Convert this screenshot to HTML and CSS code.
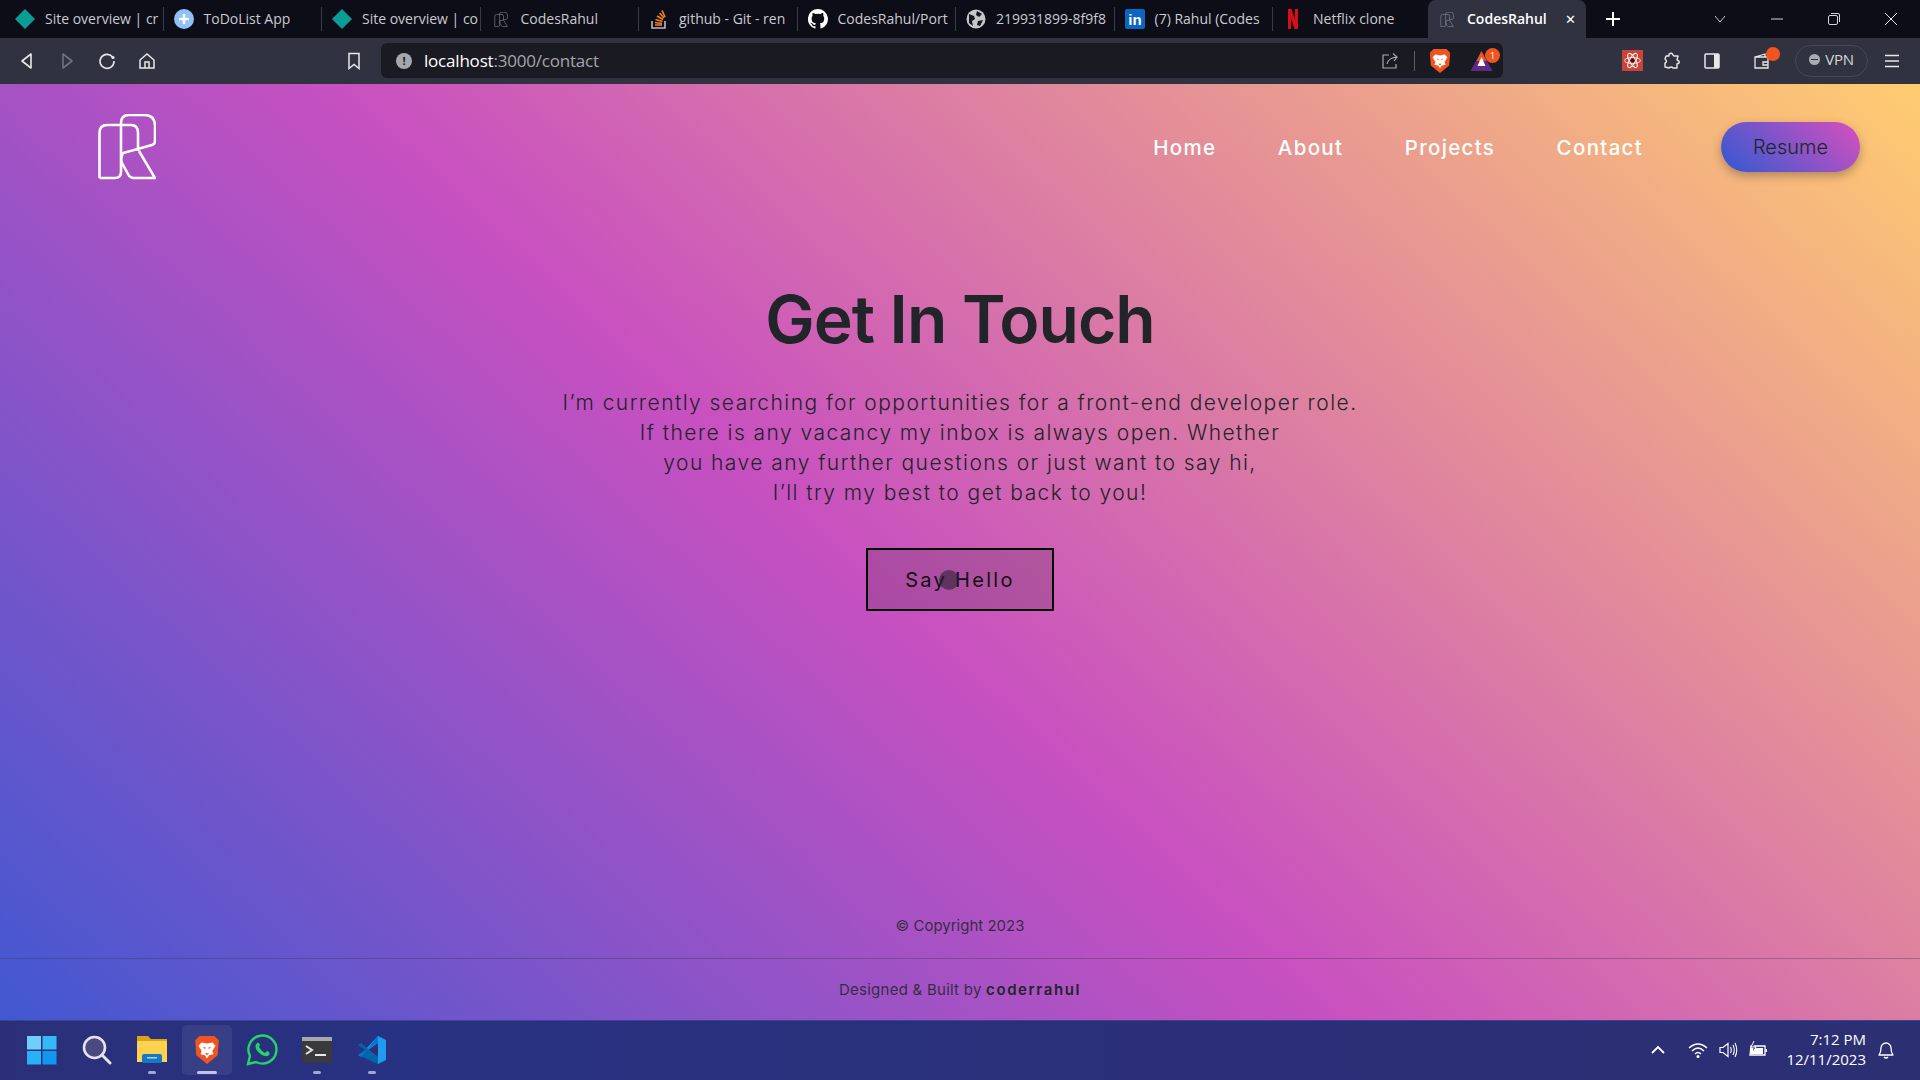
FILE: index.html
```html
<!DOCTYPE html>
<html lang="en">
<head>
<meta charset="utf-8">
<title>CodesRahul</title>
<link rel="stylesheet" href="styles.css">
</head>
<body>
<svg class="defs" width="0" height="0">
  <symbol id="rlogo" viewBox="0 0 58 66">
    <g fill="none" stroke="currentColor" stroke-width="2.600">
      <path d="M1.500 64V19Q1.500 11 9 11H33Q40 11 40 19V37"/>
      <path d="M1.500 64H17Q23 64 23 58V9Q23 1 31 1H46Q57 1 57 12V27Q57 30 54 31L25 39Q22 44 24 49L30 60Q32 64 36 64H57L41 37"/>
    </g>
  </symbol>
  <symbol id="brave" viewBox="0 0 24 28">
    <path d="M5 1H19L23 5 22 19 12 27 2 19 1 5Z" fill="#f1551f"/>
    <path d="M7 7L12 8 17 7 20 10 17 15 18 18 14 19 12 22 10 19 6 18 7 15 4 10Z" fill="#fff"/>
    <path d="M8 11L11 12 10 13ZM16 11L13 12 14 13ZM10 17H14L12 19Z" fill="#f1551f"/>
  </symbol>
</svg>

<div class="tabs">
  <div class="tab"><svg class="fav" viewBox="0 0 20 20"><path d="M10 0L20 10 10 20 0 10Z" fill="#0a9d97"/></svg><span class="tab-title">Site overview | cr</span></div>
  <div class="tab"><svg class="fav" viewBox="0 0 20 20"><circle cx="10" cy="10" r="10" fill="#8fc3f7"/><path d="M10 5V15M5 10H15" stroke="#fff" stroke-width="2.500"/></svg><span class="tab-title">ToDoList App</span></div>
  <div class="tab"><svg class="fav" viewBox="0 0 20 20"><path d="M10 0L20 10 10 20 0 10Z" fill="#0a9d97"/></svg><span class="tab-title">Site overview | co</span></div>
  <div class="tab"><svg class="fav fav-r"><use href="#rlogo"/></svg><span class="tab-title">CodesRahul</span></div>
  <div class="tab"><svg class="fav" viewBox="0 0 20 20"><path d="M3 12V19H16V12" fill="none" stroke="#bcbbbb" stroke-width="1.600"/><path d="M6 16H13M6 13.500L13 14.500M6.500 10.500L13.500 12.500M8 7L14 10.500M10.500 4L15 9M13 1.500L16 8" stroke="#f48024" stroke-width="1.700"/></svg><span class="tab-title">github - Git - ren</span></div>
  <div class="tab"><svg class="fav" viewBox="0 0 20 20"><path fill="#fff" d="M10 0a10 10 0 0 0-3.200 19.500c.5.100.7-.2.700-.5v-1.800c-2.800.6-3.400-1.300-3.400-1.300-.5-1.100-1.100-1.500-1.100-1.500-.9-.6.100-.6.100-.6 1 .1 1.500 1 1.500 1 .9 1.500 2.300 1.100 2.900.8.100-.6.300-1.100.6-1.300-2.200-.3-4.500-1.100-4.500-4.900 0-1.100.4-2 1-2.700-.1-.3-.4-1.300.1-2.700 0 0 .8-.3 2.700 1a9.500 9.500 0 0 1 5 0c1.900-1.300 2.700-1 2.700-1 .5 1.400.2 2.400.1 2.700.6.700 1 1.600 1 2.700 0 3.800-2.300 4.600-4.500 4.900.4.300.7.900.7 1.900V19c0 .3.200.6.700.5A10 10 0 0 0 10 0z"/></svg><span class="tab-title">CodesRahul/Port</span></div>
  <div class="tab"><svg class="fav" viewBox="0 0 20 20"><circle cx="10" cy="10" r="9.500" fill="#c5c6ca"/><path d="M3 5L8 7 9 10 6 12 7 17 3 14ZM11 2L16 5 13 8 10 6ZM12 12L17 11 14 17 11 16Z" fill="#15161f"/></svg><span class="tab-title">219931899-8f9f8</span></div>
  <div class="tab"><svg class="fav" viewBox="0 0 20 20"><rect width="20" height="20" rx="2" fill="#0a66c2"/><text class="li" x="10" y="16" text-anchor="middle">in</text></svg><span class="tab-title">(7) Rahul (Codes</span></div>
  <div class="tab"><svg class="fav" viewBox="0 0 20 20"><path d="M5 0H8.500L15 20H11.500ZM5 0H8V20L5 20ZM12 0H15V20H12Z" fill="#d70d18"/></svg><span class="tab-title">Netflix clone</span></div>
  <div class="tab tab-active"><svg class="fav fav-r"><use href="#rlogo"/></svg><span class="tab-title">CodesRahul</span><span class="tab-close">✕</span></div>
  <div class="newtab"><svg width="16" height="16" viewBox="0 0 16 16"><path d="M8 1V15M1 8H15" stroke="#fff" stroke-width="2"/></svg></div>
  <div class="win">
    <svg class="win-i" viewBox="0 0 14 14"><path d="M2 4L7 10 12 4" fill="none" stroke="#c9cad0" stroke-width="1"/></svg>
    <svg class="win-i" viewBox="0 0 14 14"><path d="M1 7H13" stroke="#d5d6da" stroke-width="1"/></svg>
    <svg class="win-i" viewBox="0 0 14 14"><rect x="1.500" y="3.500" width="9" height="9" rx="1.500" fill="none" stroke="#d5d6da"/><path d="M4 1.500H11Q12.500 1.500 12.500 3V10" fill="none" stroke="#d5d6da"/></svg>
    <svg class="win-i" viewBox="0 0 14 14"><path d="M1 1L13 13M13 1L1 13" stroke="#e6e6e8" stroke-width="1"/></svg>
  </div>
</div>

<div class="toolbar">
  <div class="nav-btns">
    <svg class="tb" viewBox="0 0 18 18"><path d="M13 2V16L4 9Z" fill="none" stroke="#e8e8ea" stroke-width="1.600" stroke-linejoin="round"/></svg>
    <svg class="tb" viewBox="0 0 18 18"><path d="M5 2V16L14 9Z" fill="none" stroke="#70727c" stroke-width="1.600" stroke-linejoin="round"/></svg>
    <svg class="tb" viewBox="0 0 18 18"><path d="M14.500 5A7 7 0 1 0 16 9" fill="none" stroke="#e8e8ea" stroke-width="1.600"/><circle cx="15" cy="5.500" r="1.600" fill="#e8e8ea"/></svg>
    <svg class="tb" viewBox="0 0 18 18"><path d="M2 8L9 2 16 8V16H2ZM7 16V10H11V16" fill="none" stroke="#e8e8ea" stroke-width="1.500"/></svg>
  </div>
  <svg class="tb bookmark" viewBox="0 0 18 18"><path d="M4 1.500H14V16.500L9 12.500 4 16.500Z" fill="none" stroke="#e8e8ea" stroke-width="1.500"/></svg>
  <div class="address">
    <span class="info">!</span>
    <span class="url"><span class="url-host">localhost</span>:3000/contact</span>
    <div class="addr-right">
      <svg class="tb" viewBox="0 0 18 18"><path d="M8 3H2V16H15V12" fill="none" stroke="#a9abb2" stroke-width="1.200"/><path d="M6 12Q7 6 16 5M12 1.500L16 5 13 9" fill="none" stroke="#a9abb2" stroke-width="1.200"/></svg>
      <span class="addr-sep"></span>
      <svg class="brave-sm"><use href="#brave"/></svg>
      <span class="rewards"><svg width="23" height="20" viewBox="0 0 22 20"><path d="M11 0L22 20H0Z" fill="#5f2a86"/><path d="M11 0L16 10H6Z" fill="#f1551f"/><path d="M11 6L15 15H7Z" fill="#fff"/></svg><span class="rewards-badge">1</span></span>
    </div>
  </div>
  <div class="ext">
    <span class="ext-react"><svg width="21" height="21" viewBox="0 0 21 21"><rect width="21" height="21" fill="#c8443a"/><g fill="none" stroke="#f6e6e2"><ellipse cx="10.500" cy="10.500" rx="8" ry="3"/><ellipse cx="10.500" cy="10.500" rx="8" ry="3" transform="rotate(60 10.500 10.500)"/><ellipse cx="10.500" cy="10.500" rx="8" ry="3" transform="rotate(120 10.500 10.500)"/></g><circle cx="10.500" cy="10.500" r="2" fill="#3a1512"/></svg></span>
    <svg class="tb" viewBox="0 0 18 18"><path d="M6 2Q9 0 10 3L11 4H15L14 8Q17 9 16 11L14 12V16H10Q8 14 6 16L2 15V11Q5 10 2 7L3 4H6Z" fill="none" stroke="#e8e8ea" stroke-width="1.400" stroke-linejoin="round"/></svg>
    <svg class="tb" viewBox="0 0 18 18"><rect x="2" y="2" width="14" height="14" rx="1" fill="none" stroke="#e8e8ea" stroke-width="1.500"/><rect x="11" y="2" width="5" height="14" fill="#e8e8ea"/></svg>
    <span class="wallet"><svg class="tb" viewBox="0 0 18 18"><path d="M2 5H15V16H2ZM2 5L12 2V5M10 10H15V13H10Z" fill="none" stroke="#e8e8ea" stroke-width="1.300"/></svg><span class="wallet-dot"></span></span>
    <span class="vpn"><span class="vpn-dot"></span>VPN</span>
    <svg class="tb" viewBox="0 0 18 18"><path d="M2 3.500H16M2 9H16M2 14.500H16" stroke="#e8e8ea" stroke-width="1.400"/></svg>
  </div>
</div>

<div class="page">
  <header class="site-head">
    <svg class="logo"><use href="#rlogo"/></svg>
    <nav class="site-nav">
      <a>Home</a><a>About</a><a>Projects</a><a>Contact</a>
    </nav>
    <span class="resume">Resume</span>
  </header>
  <main class="contact">
    <h1>Get In Touch</h1>
    <p>I’m currently searching for opportunities for a front-end developer role.<br>If there is any vacancy my inbox is always open. Whether<br>you have any further questions or just want to say hi,<br>I’ll try my best to get back to you!</p>
    <span class="hello">Say Hello<span class="cursor"></span></span>
  </main>
  <footer class="site-foot">
    <div class="copy">© Copyright 2023</div>
    <div class="built"><span class="built-text">Designed &amp; Built by</span> <b>coderrahul</b></div>
  </footer>
</div>

<div class="taskbar">
  <div class="apps">
    <span class="app"><svg width="32" height="30" viewBox="0 0 32 30"><rect x="1" y="1" width="14" height="13.500" fill="#6ed0f9"/><rect x="16.500" y="1" width="14" height="13.500" fill="#38b7f7"/><rect x="1" y="16" width="14" height="13.500" fill="#2ab0f6"/><rect x="16.500" y="16" width="14" height="13.500" fill="#0f98ee"/></svg></span>
    <span class="app"><svg width="30" height="30" viewBox="0 0 30 30"><circle cx="12.500" cy="12.500" r="10.500" fill="#4a4a80" stroke="#e4e4ea" stroke-width="2.600"/><path d="M20 20L28 28" stroke="#e4e4ea" stroke-width="3" stroke-linecap="round"/></svg></span>
    <span class="app app-open"><svg width="32" height="30" viewBox="0 0 32 30"><path d="M1 1H12L15 4H31V27H1Z" fill="#dba21a"/><path d="M1 6H31V27H1Z" fill="#fbd34f"/><rect x="6" y="19" width="20" height="9" rx="2" fill="#1677c5"/><rect x="11" y="22" width="10" height="1.500" fill="#9fd3f5"/></svg></span>
    <span class="app app-active"><svg width="26" height="30"><use href="#brave"/></svg></span>
    <span class="app"><svg width="32" height="32" viewBox="0 0 32 32"><path d="M2 30L4 22A14 14 0 1 1 10 28Z" fill="none" stroke="#25d366" stroke-width="2.400"/><path d="M11 9Q13 8 14 11L13 13Q15 17 19 19L21 17Q24 18 23.500 20.500 21 24 15 20.500 9 16 9.500 11.500Z" fill="#25d366"/></svg></span>
    <span class="app app-open"><svg width="30" height="26" viewBox="0 0 30 26"><rect width="30" height="26" rx="2" fill="#3a3a3e"/><rect width="30" height="4" fill="#a8a8a8"/><path d="M4 9L10 13 4 17" fill="none" stroke="#e8e8e8" stroke-width="2"/><path d="M13 18H24" stroke="#e8e8e8" stroke-width="2"/></svg></span>
    <span class="app app-open"><svg width="30" height="30" viewBox="0 0 30 30"><path d="M21 1L29 5V25L21 29 7 16 21 1Z" fill="#1f9cf0"/><path d="M21 8V22L11 15Z" fill="#2b2f78"/><path d="M1 10L4 8 21 22V29L1 20 8 15Z" fill="#0065a9"/><path d="M1 20L21 8V1L4 22Z" fill="#007acc"/></svg></span>
  </div>
  <div class="tray">
    <svg class="tray-i" viewBox="0 0 20 20"><path d="M4 13L10 7 16 13" fill="none" stroke="#fff" stroke-width="1.800"/></svg>
    <svg class="tray-i" viewBox="0 0 20 20"><path d="M1 8Q10 0 19 8M4 11Q10 5 16 11M7 14Q10 11 13 14" fill="none" stroke="#fff" stroke-width="1.400"/><circle cx="10" cy="16.500" r="1.500" fill="#fff"/></svg>
    <svg class="tray-i" viewBox="0 0 20 20"><path d="M2 7.500H5L10 3.500V16.500L5 12.500H2Z" fill="none" stroke="#fff" stroke-width="1.200"/><path d="M12.500 7Q14 10 12.500 13M15 5Q17.500 10 15 15M17 3Q20.500 10 17 17" fill="none" stroke="#fff" stroke-width="1.100"/></svg>
    <svg class="tray-i" viewBox="0 0 20 20"><path d="M3 6H17V15H2Z" fill="none" stroke="#fff" stroke-width="1.300"/><rect x="3" y="8" width="12" height="6" fill="#fff"/><rect x="17.500" y="9" width="1.500" height="3" fill="#fff"/><path d="M6 1L3 7H8L5 12" fill="#2a2f78" stroke="#fff"/></svg>
    <div class="clock"><div>7:12 PM</div><div>12/11/2023</div></div>
    <svg class="tray-i bell" viewBox="0 0 20 20"><path d="M3 15Q5 12 5 8A5 5 0 0 1 15 8Q15 12 17 15ZM8 17Q10 19 12 17" fill="none" stroke="#fff" stroke-width="1.300" stroke-linejoin="round"/></svg>
  </div>
</div>
</body>
</html>
```

FILE: styles.css
```css
* { box-sizing: border-box; }
html, body { margin: 0; height: 100%; }
body {
  width: 1920px;
  height: 1080px;
  overflow: hidden;
  display: flex;
  flex-direction: column;
  font-family: "Inter", "Liberation Sans", sans-serif;
}
.defs { display: block; height: 0; }

/* tab strip */
.tabs {
  height: 38px;
  flex: none;
  display: flex;
  align-items: stretch;
  padding-left: 5px;
  background: #0c0d17;
  color: #c9cad0;
  font-family: "Open Sans", sans-serif;
  font-size: 14px;
}
.tab {
  width: 158.500px;
  display: flex;
  align-items: center;
  padding-left: 10px;
  gap: 10px;
  position: relative;
}
.tab::after {
  content: "";
  position: absolute;
  right: 0;
  top: 7px;
  bottom: 7px;
  width: 1px;
  background: #3a3c47;
}
.tab:nth-child(9)::after, .tab-active::after { display: none; }
.fav { width: 20px; height: 20px; flex: none; }
.fav-r { height: 15px; color: #8a8b93; }
.li { fill: #fff; font: 700 15px "Liberation Sans", sans-serif; }
.tab-title { white-space: nowrap; flex: 1; min-width: 0; padding-bottom: 1px; }
.tab-active {
  width: 158px;
  margin-left: -3.500px;
  padding-left: 9px;
  background: #30333f;
  border-radius: 8px 8px 0 0;
  color: #fff;
  font-weight: 600;
}
.tab-close { font-size: 13px; margin-right: 10px; font-weight: 400; }
.newtab { width: 54px; display: flex; align-items: center; justify-content: center; }
.win { margin-left: auto; display: flex; align-items: center; gap: 43px; padding-right: 22px; }
.win-i { width: 14px; height: 14px; display: block; }

/* toolbar */
.toolbar {
  height: 46px;
  flex: none;
  display: flex;
  align-items: center;
  padding: 0 14px 1px 18px;
  background: #30333f;
}
.tb { width: 18px; height: 18px; flex: none; display: block; }
.nav-btns { display: flex; gap: 22px; }
.bookmark { margin-left: 189px; }
.address {
  margin-left: 18px;
  width: 1122px;
  height: 35px;
  display: flex;
  align-items: center;
  padding-left: 15px;
  background: #1a1b22;
  border-radius: 6px;
  color: #a2a4ab;
  font-family: "Open Sans", sans-serif;
  font-size: 17px;
  letter-spacing: -.2px;
}
.info {
  width: 16px;
  height: 16px;
  border-radius: 50%;
  background: #a6a7ad;
  color: #1a1b22;
  font-size: 11px;
  font-weight: 700;
  line-height: 16px;
  text-align: center;
}
.url { margin-left: 12px; }
.url-host { color: #fff; }
.addr-right { margin-left: auto; display: flex; align-items: center; padding-right: 10px; }
.addr-sep { width: 1px; height: 20px; background: #5a5c66; margin: 0 14px 0 15px; }
.brave-sm { width: 22px; height: 26px; display: block; }
.rewards { position: relative; display: block; margin-left: 19px; height: 20px; width: 23px; }
.rewards-badge {
  position: absolute;
  top: -3px;
  right: -7px;
  width: 15px;
  height: 15px;
  border-radius: 50%;
  background: #f1551f;
  color: #fff;
  font-size: 9px;
  letter-spacing: 0;
  line-height: 15px;
  text-align: center;
}
.ext { margin-left: 119px; display: flex; align-items: center; gap: 22px; }
.ext-react { display: block; height: 21px; width: 21px; margin-right: -2px; }
.wallet { position: relative; display: block; margin-left: 10px; }
.wallet-dot {
  position: absolute;
  top: -5px;
  right: -9px;
  width: 14px;
  height: 14px;
  border-radius: 50%;
  background: #f1551f;
}
.vpn {
  width: 73px;
  height: 32px;
  margin-left: 2px;
  margin-right: -7px;
  padding-bottom: 3px;
  display: flex;
  align-items: center;
  justify-content: center;
  gap: 5px;
  border: 1px solid #454752;
  border-radius: 16px;
  color: #d5d6da;
  font-family: "Open Sans", sans-serif;
  font-size: 15px;
  letter-spacing: -.3px;
}
.vpn-dot { width: 11px; height: 11px; border-radius: 50%; background: #a9abb2; position: relative; }
.vpn-dot::after { content: ""; position: absolute; left: 2px; right: 2px; top: 5px; height: 1.500px; background: #30333f; }

/* page */
.page {
  flex: 1;
  min-height: 0;
  display: flex;
  flex-direction: column;
  background: linear-gradient(43deg, #4158d0 0%, #c850c0 46%, #ffcc70 100%);
  color: #212529;
}
.site-head {
  height: 126px;
  flex: none;
  display: flex;
  align-items: center;
  padding: 0 60px 0 98px;
}
.logo { width: 58px; height: 66px; color: #fff; flex: none; display: block; }
.site-nav { margin-left: auto; display: flex; gap: 61.500px; color: #fff; font-size: 20.500px; font-weight: 500; letter-spacing: 1.300px; }
.resume {
  margin-left: 78px;
  width: 139px;
  height: 50px;
  display: flex;
  align-items: center;
  justify-content: center;
  border-radius: 25px;
  background: linear-gradient(43deg, #4158d0 10%, #c850c0 90%);
  box-shadow: 0 4px 10px rgba(60, 40, 40, .35);
  font-size: 20px;
  font-weight: 300;
}
.contact { display: flex; flex-direction: column; align-items: center; text-align: center; padding-top: 70px; }
.contact h1 { margin: 0; font-size: 66px; font-weight: 600; line-height: 78px; letter-spacing: -1px; }
.contact p { margin: 30px 0 0; font-size: 21px; font-weight: 350; line-height: 30px; letter-spacing: 1.450px; }
.hello {
  position: relative;
  margin-top: 40px;
  width: 188px;
  height: 63px;
  display: flex;
  align-items: center;
  justify-content: center;
  border: 2px solid #000;
  background: rgba(60, 50, 60, .2);
  color: #111;
  font-size: 20px;
  letter-spacing: 2.300px;
}
.cursor {
  position: absolute;
  left: 71px;
  top: 20px;
  width: 20px;
  height: 20px;
  border-radius: 50%;
  background: rgba(30, 30, 40, .55);
}
.site-foot { margin-top: auto; text-align: center; font-size: 15px; color: rgba(33, 37, 41, .85); }
.copy { padding-bottom: 23px; }
.built { border-top: 1px solid rgba(60, 50, 80, .35); height: 62px; display: flex; align-items: center; justify-content: center; gap: .3em; }
.built-text { letter-spacing: .25px; }
.built b { font-weight: 600; letter-spacing: 1.600px; color: #212529; }

/* taskbar */
.taskbar {
  height: 60px;
  flex: none;
  display: flex;
  align-items: center;
  justify-content: space-between;
  padding: 0 24px 1px 17px;
  background: linear-gradient(90deg, #2a2f78 0%, #283282 20%, #2a2f78 60%, #2c2f72 100%);
  border-top: 1px solid #3d4490;
}
.apps { display: flex; align-items: center; gap: 5px; }
.app { width: 50px; height: 50px; display: flex; align-items: center; justify-content: center; position: relative; border-radius: 5px; }
.app-open::after, .app-active::after {
  content: "";
  position: absolute;
  bottom: 1px;
  left: 50%;
  width: 8px;
  height: 3px;
  margin-left: -4px;
  border-radius: 2px;
  background: #a5a7c8;
}
.app-active { background: rgba(255, 255, 255, .07); }
.app-active::after { width: 20px; margin-left: -10px; background: #c4c2ea; }
.tray { display: flex; align-items: center; gap: 10px; color: #fff; }
.tray-i { width: 20px; height: 20px; display: block; }
.tray-i:first-child { margin-right: 10px; }
.clock { margin-left: 8px; padding-bottom: 3px; text-align: right; font-family: "Open Sans", sans-serif; font-size: 15px; line-height: 20px; }
.bell { margin-left: 0; }
```
